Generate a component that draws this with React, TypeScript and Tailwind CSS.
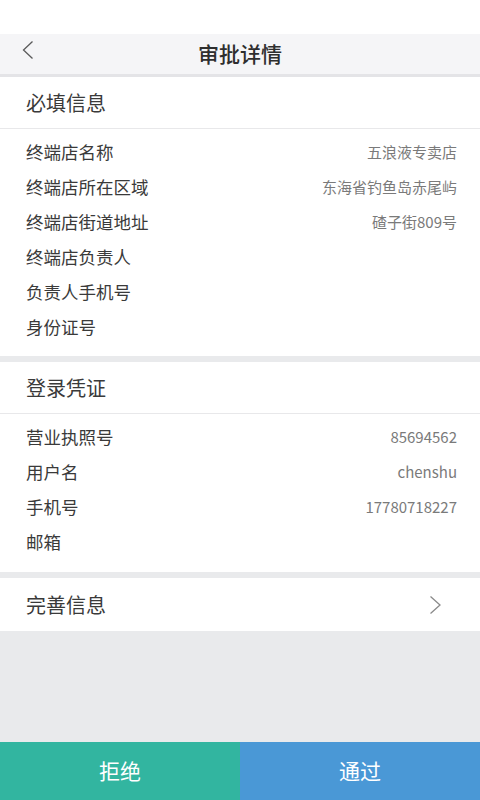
import React from "react";

const font = { fontFamily: '"Noto Sans CJK SC", "Noto Sans", sans-serif' };

function Row({ label, value }: { label: string; value?: string }) {
  return (
    <div className="flex h-[35px] items-center justify-between pl-[26px] pr-[23px]">
      <span className="text-[17.5px] text-[#3a3a3a]">{label}</span>
      {value ? <span className="text-[15px] text-[#7a7a7a]">{value}</span> : null}
    </div>
  );
}

function Header({ title }: { title: string }) {
  return (
    <div className="flex h-[52px] items-center border-b border-[#e8e8ea] pl-[26px]">
      <span className="text-[20px] text-[#3a3a3a]">{title}</span>
    </div>
  );
}

export default function App() {
  return (
    <div className="flex h-[800px] w-[480px] flex-col bg-[#e9eaec]" style={font}>
      <div className="h-[34px] shrink-0 bg-white" />
      <div className="relative flex h-[43px] shrink-0 items-center justify-center border-b-[3px] border-[#e4e4e7] bg-[#f5f5f7]">
        <svg className="absolute left-[21px] top-[6px]" width="13" height="20" viewBox="0 0 13 20">
          <path d="M11.5 1.5 L2.5 10 L11.5 18.5" fill="none" stroke="#5a5a5a" strokeWidth="1.3" />
        </svg>
        <span className="text-[21px] font-medium text-[#2e2e2e]">审批详情</span>
      </div>

      <div className="shrink-0 bg-white">
        <Header title="必填信息" />
        <div className="pt-[6px] pb-[11px]">
          <Row label="终端店名称" value="五浪液专卖店" />
          <Row label="终端店所在区域" value="东海省钓鱼岛赤尾屿" />
          <Row label="终端店街道地址" value="碴子街809号" />
          <Row label="终端店负责人" />
          <Row label="负责人手机号" />
          <Row label="身份证号" />
        </div>
      </div>

      <div className="mt-[6px] shrink-0 bg-white">
        <Header title="登录凭证" />
        <div className="pt-[6px] pb-[12px]">
          <Row label="营业执照号" value="85694562" />
          <Row label="用户名" value="chenshu" />
          <Row label="手机号" value="17780718227" />
          <Row label="邮箱" />
        </div>
      </div>

      <div className="mt-[6px] flex h-[53px] shrink-0 items-center justify-between bg-white pl-[26px] pr-[38px]">
        <span className="text-[20px] text-[#3a3a3a]">完善信息</span>
        <svg width="13" height="20" viewBox="0 0 13 20">
          <path d="M1.5 1.5 L11 10 L1.5 18.5" fill="none" stroke="#8a8a8a" strokeWidth="1.3" />
        </svg>
      </div>

      <div className="flex-1" />

      <div className="flex h-[58px] shrink-0">
        <div className="flex flex-1 items-center justify-center bg-[#32b5a0] text-[21px] text-white">拒绝</div>
        <div className="flex flex-1 items-center justify-center bg-[#4a98d6] text-[21px] text-white">通过</div>
      </div>
    </div>
  );
}
